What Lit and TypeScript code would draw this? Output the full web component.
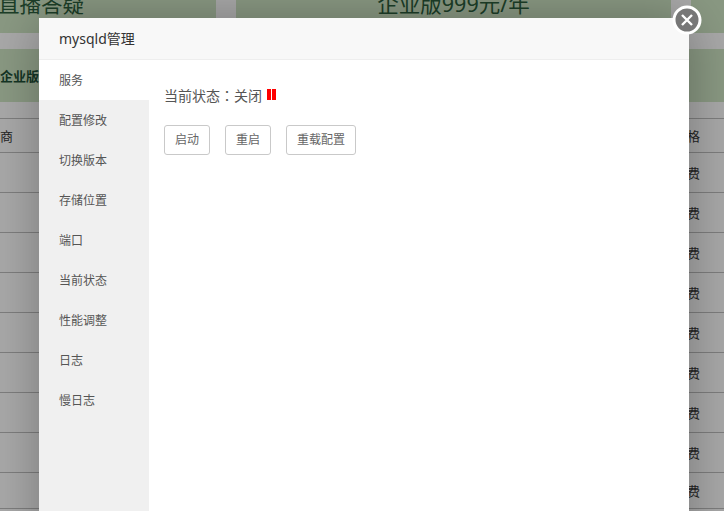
import { LitElement, html, css } from "lit";
import { customElement } from "lit/decorators.js";

const MENU = ["服务", "配置修改", "切换版本", "存储位置", "端口", "当前状态", "性能调整", "日志", "慢日志"];
const ROWS = Array.from({ length: 8 });

@customElement("app-root")
export class AppRoot extends LitElement {
  static styles = css`
    :host {
      display: block;
      position: relative;
      width: 724px;
      height: 511px;
      overflow: hidden;
      background: #f3f3f3;
      font-family: "Noto Sans", "Noto Sans CJK SC", sans-serif;
      color: #333;
      font-size: 12px;
    }
    .page { display: flex; flex-direction: column; }
    .top { display: flex; gap: 20px; height: 33px; margin-bottom: 16px; }
    .card {
      background: #c6dcbc;
      color: #2a5a3a;
      font-size: 21.5px;
      display: flex;
      justify-content: center;
      white-space: nowrap;
      overflow: hidden;
      line-height: 20px;
      height: 33px;
    }
    .card span { display: block; margin-top: -6px; }
    .c1 { width: 216px; justify-content: flex-start; }
    .c1 span { margin-left: -2px; }
    .c2 { width: 435px; }
    .c3 { flex: 1; }
    .banner {
      height: 53px;
      background: #c6dcbc;
      color: #1d4d35;
      font-size: 13px;
      font-weight: bold;
      line-height: 54px;
      white-space: nowrap;
    }
    .thead, .row { box-sizing: border-box; border-bottom: 1px solid #b5b5b5; font-size: 13px; }
    .gap { height: 16px; border-bottom: 1px solid #b5b5b5; box-sizing: content-box; }
    .thead {
      height: 34px;
      display: flex;
      justify-content: space-between;
      align-items: center;
      padding-right: 24px;
    }
    .row {
      height: 40px;
      display: flex;
      justify-content: flex-end;
      align-items: center;
      padding-right: 24px;
    }
    .row.short { height: 36px; }
    .shade { position: absolute; inset: 0; background: rgba(0, 0, 0, 0.3); }
    .layer {
      position: absolute;
      left: 39px;
      top: 18px;
      width: 650px;
      height: 560px;
      background: #fff;
      box-shadow: 1px 1px 50px rgba(0, 0, 0, 0.3);
      display: flex;
      flex-direction: column;
    }
    .title {
      height: 42px;
      box-sizing: border-box;
      flex: none;
      padding-left: 20px;
      line-height: 41px;
      font-size: 14px;
      background: #f8f8f8;
      border-bottom: 1px solid #eee;
    }
    .body { flex: 1; display: flex; }
    .menu { width: 110px; background: #f0f0f0; flex: none; color: #555; }
    .item { height: 40px; line-height: 41px; padding-left: 20px; }
    .item.on { background: #fff; }
    .main { padding: 25px 15px; flex: 1; }
    .status { display: flex; align-items: center; height: 19px; font-size: 14px; color: #555; gap: 5px; }
    .colon { font-family: "Noto Sans CJK TC", sans-serif; }
    .bars { display: inline-flex; gap: 1px; }
    .bars i { display: block; width: 4px; height: 11px; background: #f00; }
    .btns { display: flex; gap: 15px; margin-top: 21px; }
    .btn {
      height: 30px;
      box-sizing: border-box;
      padding: 0 10px;
      border: 1px solid #c9c9c9;
      border-radius: 3px;
      background: #fff;
      color: #666;
      font: inherit;
      font-size: 12px;
      line-height: 28px;
    }
    .close {
      position: absolute;
      left: 672px;
      top: 5px;
      width: 30px;
      height: 30px;
    }
    .close svg { display: block; }
  `;

  render() {
    return html`
      <div class="page">
        <div class="top">
          <div class="card c1"><span>直播答疑</span></div>
          <div class="card c2"><span>企业版999元/年</span></div>
          <div class="card c3"></div>
        </div>
        <div class="banner">企业版</div>
        <div class="gap"></div>
        <div class="thead"><span>商</span><span>价格</span></div>
        ${ROWS.map(() => html`<div class="row"><span>免费</span></div>`)}
        <div class="row short"><span>免费</span></div>
      </div>
      <div class="shade"></div>
      <div class="layer">
        <div class="title">mysqld管理</div>
        <div class="body">
          <div class="menu">
            ${MENU.map((m, i) => html`<div class="item ${i === 0 ? "on" : ""}">${m}</div>`)}
          </div>
          <div class="main">
            <div class="status"><span>当前状态<span class="colon">：</span>关闭</span><span class="bars"><i></i><i></i></span></div>
            <div class="btns">
              <button class="btn">启动</button>
              <button class="btn">重启</button>
              <button class="btn">重载配置</button>
            </div>
          </div>
        </div>
      </div>
      <div class="close">
        <svg width="30" height="30" viewBox="0 0 30 30">
          <circle cx="15" cy="15" r="13" fill="#777" stroke="#fff" stroke-width="3" />
          <path d="M10 10 L20 20 M20 10 L10 20" stroke="#fff" stroke-width="2.4" fill="none" />
        </svg>
      </div>
    `;
  }
}
